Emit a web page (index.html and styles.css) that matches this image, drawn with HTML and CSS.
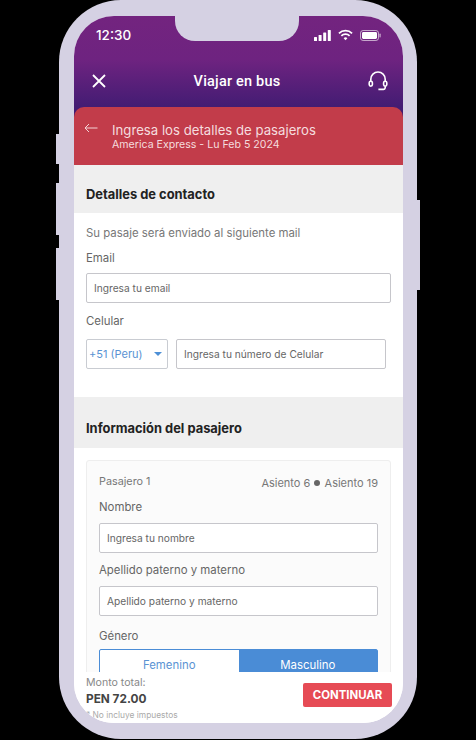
FILE: index.html
```html
<!DOCTYPE html>
<html lang="es">
<head>
    <meta charset="UTF-8">
    <meta name="viewport" content="width=device-width, initial-scale=1.0">
    <title>Viajar en bus</title>
    <link rel="stylesheet" href="styles.css">
</head>
<body>

<div class="phone">
    <!-- Botones laterales -->
    <span class="side-btn side-left-1"></span>
    <span class="side-btn side-left-2"></span>
    <span class="side-btn side-left-3"></span>
    <span class="side-btn side-right"></span>

    <div class="screen">
        <div class="notch"></div>

        <!-- Barra superior -->
        <div class="topbar">
            <div class="status">
                <span class="time">12:30</span>
                <div class="status-icons">
                    <svg width="17" height="11" viewBox="0 0 17 11" fill="#fff">
                        <rect x="0" y="7" width="3" height="4" rx="0.6"/>
                        <rect x="4.6" y="5" width="3" height="6" rx="0.6"/>
                        <rect x="9.2" y="2.5" width="3" height="8.5" rx="0.6"/>
                        <rect x="13.8" y="0" width="3" height="11" rx="0.6"/>
                    </svg>
                    <svg width="15" height="12" viewBox="0 0 16 12" fill="none" stroke="#fff" stroke-width="1.9">
                        <path d="M1 4.2a10 10 0 0 1 14 0"/>
                        <path d="M3.6 6.9a6.3 6.3 0 0 1 8.8 0"/>
                        <path d="M8 11.6l-2-2.2a2.9 2.9 0 0 1 4 0z" fill="#fff" stroke="none"/>
                    </svg>
                    <svg width="21" height="11" viewBox="0 0 21 11" fill="none">
                        <rect x="0.5" y="0.5" width="18" height="10" rx="2.6" stroke="#fff" stroke-opacity="0.6"/>
                        <rect x="2" y="2" width="15" height="7" rx="1.4" fill="#fff"/>
                        <rect x="19.4" y="3.6" width="1.3" height="3.8" rx="0.6" fill="#fff" fill-opacity="0.6"/>
                    </svg>
                </div>
            </div>
            <div class="navbar">
                <svg width="14" height="14" viewBox="0 0 14 14" fill="none" stroke="#fff" stroke-width="1.8">
                    <path d="M1 1l12 12M13 1L1 13"/>
                </svg>
                <span class="nav-title">Viajar en bus</span>
                <svg width="20" height="20" viewBox="0 0 20 20" fill="none" stroke="#fff" stroke-width="1.6">
                    <path d="M2.8 10.5V8.2a7.2 7.2 0 0 1 14.4 0v2.3"/>
                    <rect x="1.2" y="10.2" width="3.2" height="5" rx="1.6"/>
                    <rect x="15.6" y="10.2" width="3.2" height="5" rx="1.6"/>
                    <path d="M17.2 15.2v1.4a1.8 1.8 0 0 1-1.8 1.8h-5"/>
                </svg>
            </div>
        </div>

        <!-- Cabecera roja -->
        <div class="step-head">
            <svg class="back" width="14" height="10" viewBox="0 0 14 10" fill="none" stroke="#f3d3d6" stroke-width="1">
                <path d="M13.5 5H1M5 1L1 5l4 4"/>
            </svg>
            <div class="step-text">
                <div class="step-title">Ingresa los detalles de pasajeros</div>
                <div class="step-sub">America Express - Lu Feb 5 2024</div>
            </div>
        </div>

        <!-- Detalles de contacto -->
        <div class="band band-contact"><h3>Detalles de contacto</h3></div>
        <div class="contact">
            <p class="hint">Su pasaje será enviado al siguiente mail</p>
            <label class="field-label">Email</label>
            <div class="input">Ingresa tu email</div>
            <label class="field-label label-cel">Celular</label>
            <div class="phone-row">
                <div class="select">
                    <span>+51 (Peru)</span>
                    <span class="caret"></span>
                </div>
                <div class="input input-cel">Ingresa tu número de Celular</div>
            </div>
        </div>

        <!-- Información del pasajero -->
        <div class="band band-passenger"><h3>Información del pasajero</h3></div>
        <div class="passenger">
            <div class="card">
                <div class="card-head">
                    <span class="pax">Pasajero 1</span>
                    <span class="seats">Asiento 6 <i class="dot"></i> Asiento 19</span>
                </div>
                <label class="field-label label-name">Nombre</label>
                <div class="input">Ingresa tu nombre</div>
                <label class="field-label label-last">Apellido paterno y materno</label>
                <div class="input">Apellido paterno y materno</div>
                <label class="field-label label-gender">Género</label>
                <div class="gender">
                    <div class="gender-opt">Femenino</div>
                    <div class="gender-opt active">Masculino</div>
                </div>
            </div>
        </div>

        <!-- Pie con total -->
        <div class="footer">
            <div>
                <div class="total-label">Monto total:</div>
                <div class="total">PEN 72.00</div>
                <div class="tax">* No incluye impuestos</div>
            </div>
            <div class="continue">CONTINUAR</div>
        </div>
    </div>
</div>

</body>
</html>
```
FILE: styles.css
```css
/* Base */
html, body {
    height: 100%;
}

body {
    margin: 0;
    background-color: #000;
    font-family: 'Inter', 'Open Sans', sans-serif;
    color: #666;
    overflow: hidden;
    display: flex;
    justify-content: center;
}

.phone {
    position: relative;
    width: 358px;
    height: 739px;
    box-sizing: border-box;
    padding: 16px 14px 16px 15px;
    background-color: #d5d1e3;
    border-radius: 62px;
    display: flex;
}

.side-btn {
    position: absolute;
    width: 4px;
    background-color: #d5d1e3;
}

.side-left-1 { left: -3px; top: 134px; height: 30px; }
.side-left-2 { left: -3px; top: 183px; height: 52px; }
.side-left-3 { left: -3px; top: 248px; height: 52px; }
.side-right { right: -3px; top: 200px; height: 90px; }

.screen {
    position: relative;
    flex: 1;
    background-color: #fff;
    border-radius: 40px;
    overflow: hidden;
}

.notch {
    position: absolute;
    top: 0;
    left: 101px;
    width: 124px;
    height: 25px;
    background-color: #d5d1e3;
    border-radius: 0 0 20px 20px;
}

/* Barra superior */
.topbar {
    height: 107px;
    box-sizing: border-box;
    background: linear-gradient(#73247f 0%, #6e2380 41%, #431c73 85%, #431c73 100%);
    color: #fff;
}

.status {
    display: flex;
    justify-content: space-between;
    align-items: center;
    height: 38px;
    padding: 0 22px 0 22px;
}

.time {
    font-size: 13.5px;
    font-weight: 500;
}

.status-icons {
    display: flex;
    align-items: center;
    gap: 7px;
}

.navbar {
    display: flex;
    justify-content: space-between;
    align-items: center;
    padding: 17px 15px 0 18px;
}

.nav-title {
    font-family: 'Roboto', sans-serif;
    font-size: 14.5px;
    font-weight: 500;
    letter-spacing: 0.2px;
}

/* Cabecera roja */
.step-head {
    display: flex;
    gap: 14px;
    height: 58px;
    margin-top: -16px;
    box-sizing: border-box;
    padding: 14px 10px 0 10px;
    position: relative;
    background-color: #c23c4a;
    border-radius: 10px 10px 0 0;
    color: #f5dcdf;
}

.back {
    margin-top: 2px;
}

.step-text {
    padding-top: 1px;
}

.step-title {
    font-size: 13.2px;
    line-height: 17px;
}

.step-sub {
    font-size: 10.6px;
    line-height: 12px;
}

/* Bandas grises */
.band {
    background-color: #efefef;
    padding: 0 12px;
    display: flex;
    align-items: flex-end;
    box-sizing: border-box;
}

.band h3 {
    margin: 0;
    font-size: 12.9px;
    font-weight: 700;
    color: #222;
}

.band-contact {
    height: 48px;
    padding-bottom: 11px;
}

.band-passenger {
    height: 51px;
    padding-bottom: 12px;
}

/* Formularios */
.contact {
    height: 184px;
    box-sizing: border-box;
    padding: 13px 12px 0;
}

.hint {
    margin: 0 0 11px;
    font-size: 11.4px;
    line-height: 14px;
    color: #777;
}

.field-label {
    display: block;
    font-size: 11.4px;
    line-height: 14px;
    color: #666;
    margin-bottom: 8px;
}

.label-cel {
    margin-top: 11px;
    margin-bottom: 11px;
}

.label-name {
    margin-bottom: 9px;
}

.label-last {
    margin-top: 10px;
    margin-bottom: 9px;
}

.label-gender {
    margin-top: 13px;
    margin-bottom: 6px;
}

.input {
    height: 30px;
    box-sizing: border-box;
    padding: 0 7px;
    display: flex;
    align-items: center;
    border: 1px solid #c6c6cb;
    border-radius: 2px;
    background-color: #fff;
    font-size: 10.2px;
    color: #666;
}

.phone-row {
    display: flex;
    gap: 8px;
}

.select {
    width: 82px;
    height: 30px;
    box-sizing: border-box;
    padding: 0 5px 0 2px;
    display: flex;
    align-items: center;
    justify-content: space-between;
    border: 1px solid #c9ccd2;
    border-radius: 2px;
    font-size: 11px;
    color: #5a93d3;
}

.caret {
    width: 0;
    height: 0;
    border-left: 4px solid transparent;
    border-right: 4px solid transparent;
    border-top: 4px solid #4d8fd6;
}

.input-cel {
    width: 210px;
}

.passenger {
    padding: 12px 12px 0;
}

.card {
    border: 1px solid #eeeeee;
    border-radius: 3px;
    background-color: #fbfbfb;
    padding: 12px 12px 0;
    height: 300px;
    box-sizing: border-box;
}

.card-head {
    display: flex;
    justify-content: space-between;
    font-size: 11px;
    line-height: 16px;
    color: #777;
    margin-bottom: 9px;
}

.pax {
    font-size: 10.8px;
    margin-top: 1px;
}

.seats {
    margin-top: 2px;
}

.dot {
    display: inline-block;
    width: 6px;
    height: 6px;
    border-radius: 50%;
    background-color: #666;
    margin: 0 1px 1px;
}

.gender {
    display: flex;
    height: 30px;
    border: 1px solid #4a8cd6;
    border-radius: 2px;
    background-color: #fff;
    font-size: 11.4px;
}

.gender-opt {
    flex: 1;
    display: flex;
    align-items: center;
    justify-content: center;
    color: #5a93d3;
}

.gender-opt.active {
    background-color: #4a8cd6;
    color: #fff;
}

/* Pie */
.footer {
    position: absolute;
    left: 0;
    right: 0;
    bottom: 0;
    height: 51px;
    box-sizing: border-box;
    background-color: #fff;
    padding: 0 11px 0 12px;
    display: flex;
    justify-content: space-between;
    align-items: flex-start;
}

.total-label {
    font-size: 10.6px;
    line-height: 14px;
    margin-top: 4px;
    color: #888;
}

.total {
    font-size: 11.8px;
    font-weight: 700;
    line-height: 18px;
    color: #444;
}

.tax {
    font-size: 8.4px;
    line-height: 12px;
    margin-top: 1px;
    color: #aaa;
}

.continue {
    margin-top: 11px;
    width: 89px;
    height: 24px;
    display: flex;
    align-items: center;
    justify-content: center;
    background-color: #e64b55;
    border-radius: 2px;
    color: #fff;
    font-size: 11.4px;
    font-weight: 700;
}
```
